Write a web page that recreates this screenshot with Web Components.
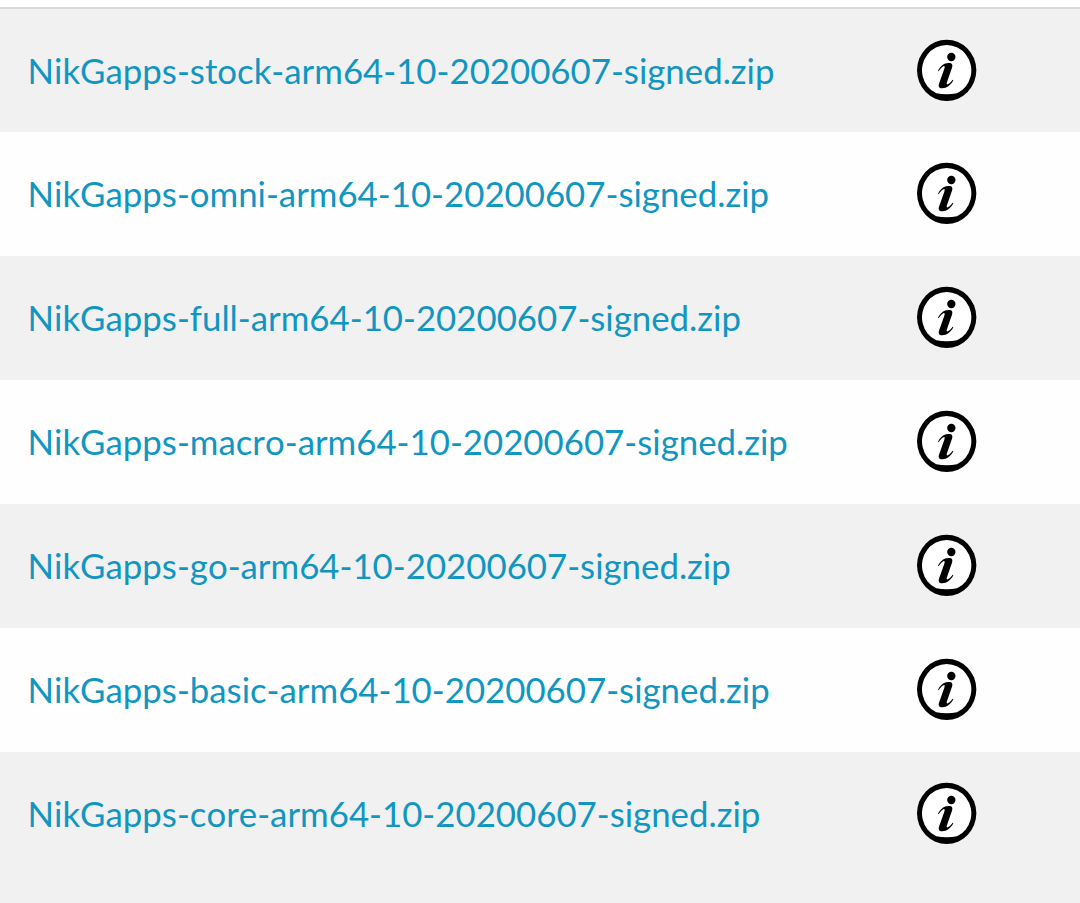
<!DOCTYPE html>
<html lang="en">
<head>
<meta charset="utf-8">
<title>NikGapps</title>
<style>
body {
  margin: 0;
  background-color: #fefefe;
}
</style>
</head>
<body>
<file-list>
  <file-row>NikGapps-stock-arm64-10-20200607-signed.zip</file-row>
  <file-row>NikGapps-omni-arm64-10-20200607-signed.zip</file-row>
  <file-row>NikGapps-full-arm64-10-20200607-signed.zip</file-row>
  <file-row>NikGapps-macro-arm64-10-20200607-signed.zip</file-row>
  <file-row>NikGapps-go-arm64-10-20200607-signed.zip</file-row>
  <file-row>NikGapps-basic-arm64-10-20200607-signed.zip</file-row>
  <file-row>NikGapps-core-arm64-10-20200607-signed.zip</file-row>
</file-list>
<script>
const iconTemplate = document.createElement('template')
iconTemplate.innerHTML =
  `
<style>
:host {
  display: block;
  width: 60px;
  height: 62px;
  margin-bottom: 2px;
}
svg {
  display: block;
  width: 100%;
  height: 100%;
}
</style>
<svg viewBox="33 27 180 186" aria-hidden="true">
  <ellipse cx="122" cy="121" rx="89" ry="92"/>
  <path fill="#fff" d="M91 190A74 76 0 1 1 153 190Q122 196 91 190Z"/>
  <circle cx="136" cy="81" r="12.5"/>
  <path d="M96 123C102 109 114 99 127 99C138 98 141 104 138 113L123 156C121 162 122 165 127 162C132 159 136 154 140 149L142 151C135 165 122 175 109 175C98 175 96 168 100 158L115 116C117 109 116 106 112 109C106 112 102 118 98 124Z"/>
</svg>
`

class InfoIcon extends HTMLElement {
  constructor () {
    super()
    this.attachShadow({ mode: 'open' })
    this.shadowRoot.appendChild(iconTemplate.content.cloneNode(true))
  }
}
customElements.define('info-icon', InfoIcon)

const rowTemplate = document.createElement('template')
rowTemplate.innerHTML =
  `
<style>
:host {
  display: grid;
  grid-template-columns: 889.5px 60px;
  align-items: center;
  box-sizing: border-box;
  height: 124px;
  padding-left: 27.5px;
}
a {
  color: #1096c1;
  font: 34.8px/44px Lato, sans-serif;
  font-kerning: none;
  text-decoration: none;
  white-space: nowrap;
}
</style>
<a href="#"><slot></slot></a>
<info-icon></info-icon>
`

class FileRow extends HTMLElement {
  constructor () {
    super()
    this.attachShadow({ mode: 'open' })
    this.shadowRoot.appendChild(rowTemplate.content.cloneNode(true))
  }
}
customElements.define('file-row', FileRow)

const listTemplate = document.createElement('template')
listTemplate.innerHTML =
  `
<style>
:host {
  display: block;
  box-sizing: border-box;
  height: 903px;
  padding-top: 7px;
  overflow: hidden;
}
.rows {
  border-top: 2px solid #d9d9d9;
}
::slotted(file-row:nth-child(odd)) {
  background-color: #f1f1f1;
}
::slotted(file-row:first-child) {
  height: 123px;
}
/* the last row runs on past the window */
::slotted(file-row:last-child) {
  height: 160px;
  padding-bottom: 36px;
}
</style>
<div class="rows"><slot></slot></div>
`

class FileList extends HTMLElement {
  constructor () {
    super()
    this.attachShadow({ mode: 'open' })
    this.shadowRoot.appendChild(listTemplate.content.cloneNode(true))
  }
}
customElements.define('file-list', FileList)
</script>
</body>
</html>
